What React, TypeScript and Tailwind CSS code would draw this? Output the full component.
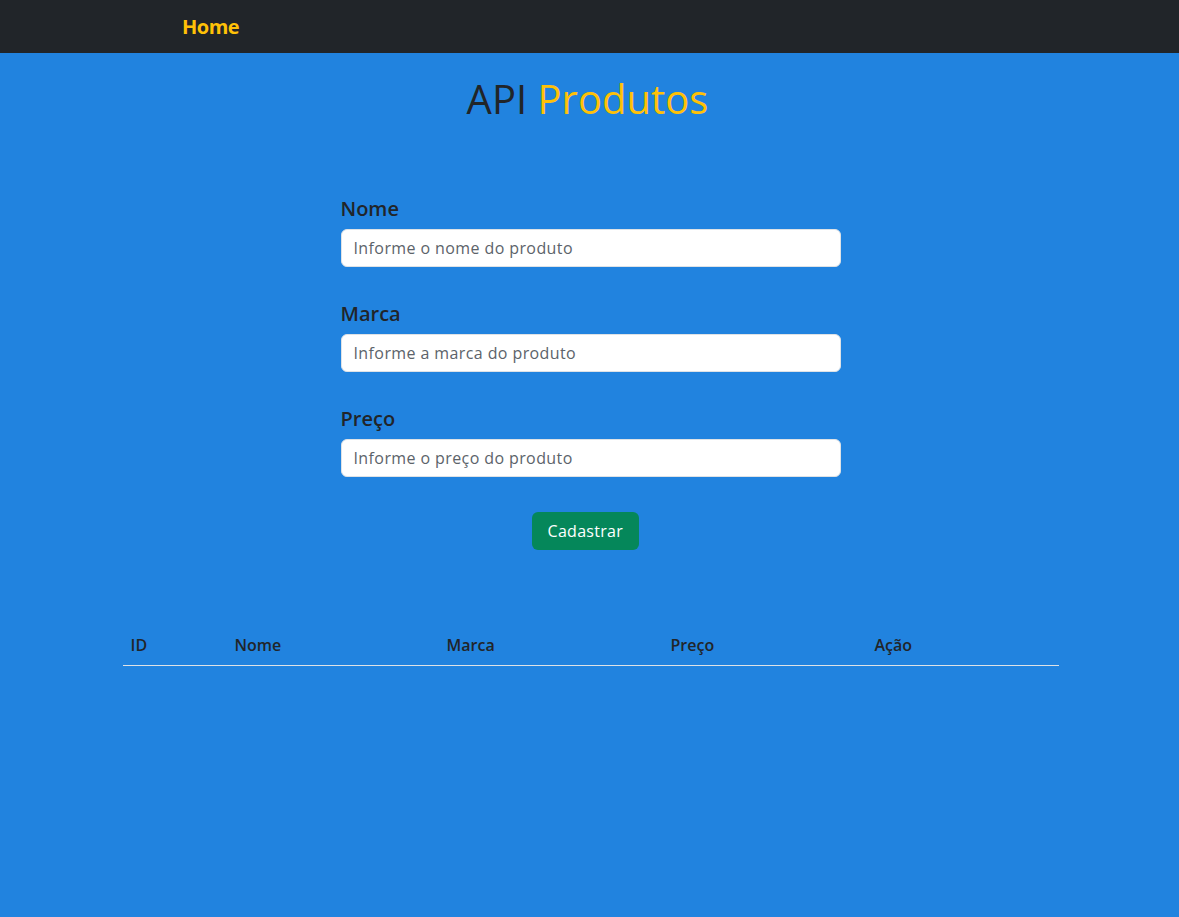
import { useState } from "react";

const font = { fontFamily: '"Open Sans", "Liberation Sans", sans-serif' };

const fields = [
  { label: "Nome", placeholder: "Informe o nome do produto" },
  { label: "Marca", placeholder: "Informe a marca do produto" },
  { label: "Preço", placeholder: "Informe o preço do produto" },
];

export default function App() {
  const [values, setValues] = useState<Record<string, string>>({});

  return (
    <div className="min-h-[917px] bg-[#2183df]" style={font}>
      <nav className="h-[53px] bg-[#212529] flex items-center">
        <a href="#" className="ml-[182px] text-[20px] font-bold text-[#ffc107] tracking-tight">
          Home
        </a>
      </nav>

      <h1 className="mt-[22px] pr-1 text-center text-[40px] leading-[48px] text-[#212529]">
        API <span className="text-[#ffc107]">Produtos</span>
      </h1>

      <form
        className="w-[500px] mx-auto mt-[74px] flex flex-col translate-x-[1px]"
        onSubmit={(e) => e.preventDefault()}
      >
        {fields.map((f) => (
          <div key={f.label} className="mb-[35px]">
            <label className="block text-[20px] leading-[24px] font-semibold text-[#212529] mb-2">
              {f.label}
            </label>
            <input
              type="text"
              placeholder={f.placeholder}
              value={values[f.label] ?? ""}
              onChange={(e) => setValues({ ...values, [f.label]: e.target.value })}
              className="w-full h-[38px] px-3 text-[16px] tracking-[0.4px] rounded-md bg-white border border-[#dee2e6] text-[#212529] placeholder:text-[#5c636a] outline-none"
            />
          </div>
        ))}
        <div className="flex">
          <button className="ml-[191px] h-[38px] px-4 rounded-md bg-[#05875a] text-white text-[16px] tracking-[0.3px]">
            Cadastrar
          </button>
        </div>
      </form>

      <div className="w-[936px] mx-auto mt-[75px] translate-x-[1px]">
        <table className="w-full text-left text-[16px] text-[#212529]">
          <thead>
            <tr className="border-b border-[#dee2e6]">
              <th className="w-[104px] px-2 py-2 font-semibold">ID</th>
              <th className="w-[212px] px-2 py-2 font-semibold">Nome</th>
              <th className="w-[224px] px-2 py-2 font-semibold">Marca</th>
              <th className="w-[204px] px-2 py-2 font-semibold">Preço</th>
              <th className="px-2 py-2 font-semibold">Ação</th>
            </tr>
          </thead>
          <tbody></tbody>
        </table>
      </div>
    </div>
  );
}
